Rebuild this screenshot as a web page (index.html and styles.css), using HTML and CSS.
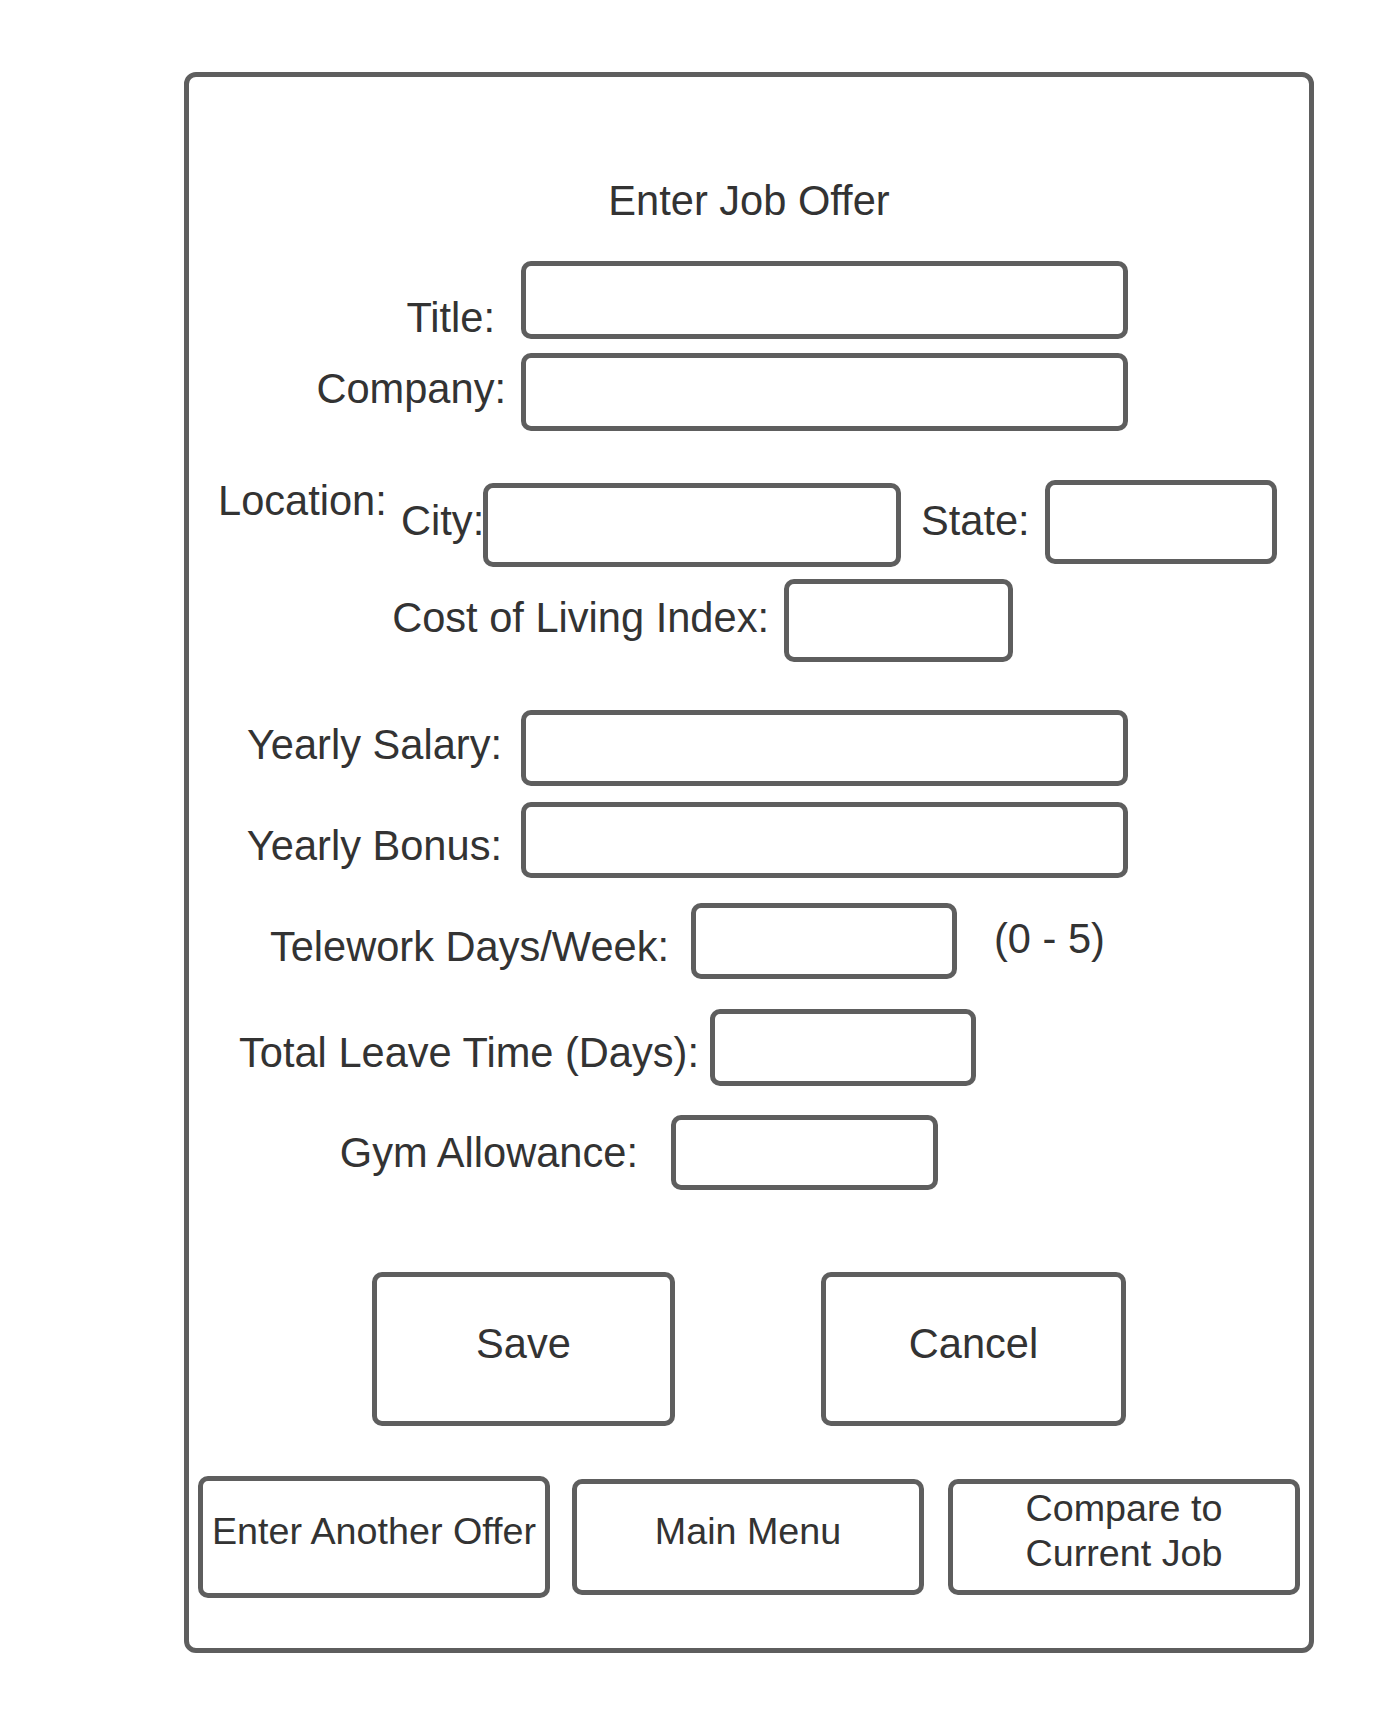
FILE: index.html
```html
<!DOCTYPE html>
<html>
<head lang="en">
    <meta charset="UTF-8">
    <title>Enter Job Offer</title>
    <link rel="stylesheet" href="styles.css">
</head>
<body>
    <div id="frame">
        <h1 class="heading">Enter Job Offer</h1>

        <div class="row row-title">
            <label class="lbl">Title:</label>
            <input class="box" type="text">
        </div>
        <div class="row row-company">
            <label class="lbl">Company:</label>
            <input class="box" type="text">
        </div>

        <div class="row row-loc">
            <span class="lbl lbl-loc">Location:</span>
            <label class="lbl lbl-city">City:</label>
            <input class="box box-city" type="text">
            <label class="lbl lbl-state">State:</label>
            <input class="box box-state" type="text">
        </div>
        <div class="row row-cost">
            <label class="lbl">Cost of Living Index:</label>
            <input class="box" type="text">
        </div>

        <div class="row row-salary">
            <label class="lbl">Yearly Salary:</label>
            <input class="box" type="text">
        </div>
        <div class="row row-bonus">
            <label class="lbl">Yearly Bonus:</label>
            <input class="box" type="text">
        </div>
        <div class="row row-tele">
            <label class="lbl">Telework Days/Week:</label>
            <input class="box" type="text">
            <span class="lbl hint">(0 - 5)</span>
        </div>
        <div class="row row-leave">
            <label class="lbl">Total Leave Time (Days):</label>
            <input class="box" type="text">
        </div>
        <div class="row row-gym">
            <label class="lbl">Gym Allowance:</label>
            <input class="box" type="text">
        </div>

        <div class="actions">
            <button class="btn btn-save">Save</button>
            <button class="btn btn-cancel">Cancel</button>
        </div>

        <div class="nav">
            <button class="btn nav-btn nav-another">Enter Another Offer</button>
            <button class="btn nav-btn nav-menu">Main Menu</button>
            <button class="btn nav-btn nav-compare">Compare to<br>Current Job</button>
        </div>
    </div>
</body>
</html>
```

FILE: styles.css
```css
*{
    margin: 0;
    padding: 0;
}
body{
    background: #fff;
    font-family: "Liberation Sans", Arial, sans-serif;
    color: #333;
}
#frame{
    width: 1130px;
    height: 1581px;
    margin: 72px 0 0 184px;
    border: 5px solid #5e5e5e;
    border-radius: 12px;
    box-sizing: border-box;
}
.heading{
    margin-top: 100px;
    font-size: 41.6px;
    font-weight: normal;
    line-height: 48px;
    text-align: center;
}
.row{
    display: flex;
    align-items: flex-start;
}
.lbl{
    font-size: 41.6px;
    line-height: 48px;
    white-space: nowrap;
    text-align: right;
}
.box{
    display: block;
    width: 607px;
    height: 78px;
    border: 5px solid #5e5e5e;
    border-radius: 10px;
    background: #fff;
    box-sizing: border-box;
    outline: none;
}

/* title / company */
.row-title{ margin-top: 36px; height: 78px; }
.row-title .lbl{ width: 306px; margin: 33px 26px 0 0; }
.row-company{ margin-top: 14px; height: 78px; }
.row-company .lbl{ width: 317px; margin: 12px 15px 0 0; }

/* location */
.row-loc{ margin-top: 46px; height: 90px; }
.lbl-loc{ width: 183px; margin-left: 29px; text-align: left; }
.lbl-city{ width: 82px; margin-top: 20px; text-align: left; }
.box-city{ width: 418px; height: 84px; margin-top: 6px; }
.lbl-state{ width: 124px; margin: 20px 0 0 20px; text-align: left; }
.box-state{ width: 232px; height: 84px; margin-top: 3px; }
.row-cost{ margin-top: 12px; height: 83px; }
.row-cost .lbl{ width: 580px; margin: 15px 15px 0 0; }
.row-cost .box{ width: 229px; height: 83px; }

/* money */
.row-salary{ margin-top: 48px; height: 76px; }
.row-salary .lbl{ width: 313px; margin: 11px 19px 0 0; }
.row-salary .box{ height: 76px; }
.row-bonus{ margin-top: 16px; height: 76px; }
.row-bonus .lbl{ width: 313px; margin: 20px 19px 0 0; }
.row-bonus .box{ height: 76px; }

/* days */
.row-tele{ margin-top: 25px; height: 76px; }
.row-tele .lbl{ width: 480px; margin: 20px 22px 0 0; }
.row-tele .box{ width: 266px; height: 76px; }
.row-tele .hint{ width: auto; margin: 12px 0 0 37px; text-align: left; }
.row-leave{ margin-top: 30px; height: 77px; }
.row-leave .lbl{ width: 510px; margin: 20px 11px 0 0; }
.row-leave .box{ width: 266px; height: 77px; }
.row-gym{ margin-top: 29px; height: 75px; }
.row-gym .lbl{ width: 449px; margin: 14px 33px 0 0; }
.row-gym .box{ width: 267px; height: 75px; }

/* buttons */
.btn{
    background: #fff;
    border: 5px solid #5e5e5e;
    border-radius: 10px;
    box-sizing: border-box;
    font-family: "Liberation Sans", Arial, sans-serif;
    color: #333;
    cursor: pointer;
}
.actions{
    display: flex;
    margin-top: 82px;
    padding-left: 183px;
    gap: 146px;
}
.actions .btn{
    width: 303px;
    height: 154px;
    font-size: 41.6px;
    line-height: 48px;
    padding: 0 0 10px;
}
.actions .btn-cancel{ width: 305px; }
.nav{
    display: flex;
    align-items: center;
    margin-top: 50px;
    padding-left: 9px;
}
.nav-btn{
    width: 352px;
    height: 116px;
    font-size: 37.7px;
    line-height: 45px;
    padding: 0 0 12px;
    white-space: nowrap;
}
.nav-another{ height: 122px; }
.nav-menu{ margin-left: 22px; }
.nav-compare{ margin-left: 24px; }
```
